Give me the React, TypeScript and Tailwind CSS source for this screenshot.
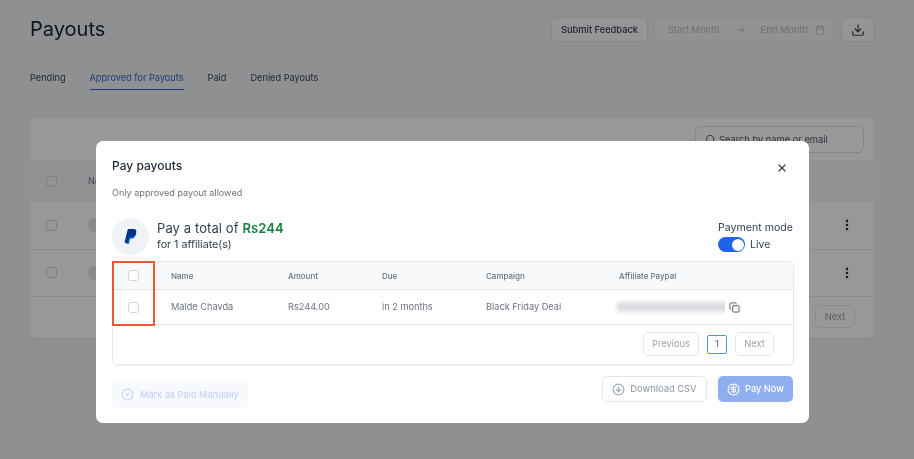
import React from "react";
import { ArrowRight, Calendar, CheckCircle2, CircleArrowDown, Copy, Download, X, MoreVertical, Search, CircleDollarSign } from "lucide-react";

const font = { fontFamily: "Inter, 'Liberation Sans', sans-serif" };

const PayPalLogo = () => (
  <svg width="14" height="16" viewBox="0 0 24 28">
    <path fill="#0070E0" d="M20.5 7.200c.2 1.500 0 3-.8 4.800-1.200 3.300-4 5-7.600 5H10.900c-.5 0-.9.400-1 .9l-1.200 7.300c-.1.500-.5.800-.9.800H4.200c-.4 0-.7-.4-.6-.8L7 8.500h9z" />
    <path fill="#003087" d="M7.300 0h9.200c3.300 0 5.600 1.900 4.700 6.500-1 5.200-4.300 7.800-9 7.800H9.600c-.6 0-1 .400-1.100.900l-1.300 8c-.1.400-.4.700-.8.700H1.500c-.5 0-.8-.4-.7-.9L6.200.9C6.300.400 6.800 0 7.300 0z" />
  </svg>
);

const BackdropPage = () => (
  <div className="min-h-[459px] bg-[#eef1f4] pl-[30px] pr-[40px] pt-[17px]">
    {/* Header */}
    <div className="-mr-[1px] flex h-[25px] items-center justify-between">
      <h1 className="text-[20px] leading-[25px] text-[#1b2230]">Payouts</h1>
      <div className="flex items-center gap-[6px] whitespace-nowrap text-[9.300px]">
        <div className="flex h-[25px] w-[97px] items-center justify-center rounded-[5px] border border-[#dde0e5] bg-[#f8f9fa] font-medium text-[#333c4e]">
          Submit Feedback
        </div>
        <div className="flex h-[25px] w-[181px] items-center rounded-[5px] border border-[#e5e7eb] bg-[#f3f4f6] pl-[13px] pr-[9px] text-[#b4b9c2]">
          <span>Start Month</span>
          <ArrowRight className="ml-[16px] h-[10px] w-[10px]" />
          <span className="ml-[15px]">End Month</span>
          <Calendar className="ml-auto h-[10px] w-[10px]" />
        </div>
        <div className="flex h-[25px] w-[34px] items-center justify-center rounded-[5px] border border-[#dde0e5] bg-[#f8f9fa]">
          <Download className="h-[14px] w-[14px] text-[#333c4e]" />
        </div>
      </div>
    </div>

    {/* Tabs */}
    <div className="mt-[20px] flex gap-[24px] border-b border-[#e8eaee] text-[9.200px] text-[#3b4352]">
      <div className="h-[28px] pt-[9px]">Pending</div>
      <div className="h-[28px] border-b-[1.500px] border-[#2f5fd0] pt-[9px] text-[#3d66c4]">Approved for Payouts</div>
      <div className="h-[28px] pt-[9px]">Paid</div>
      <div className="h-[28px] pt-[9px]">Denied Payouts</div>
    </div>

    {/* Card behind the dialog */}
    <div className="mt-[27px] h-[220px] rounded-[6px] bg-white/90 shadow-[0_1px_2px_rgba(0,0,0,0.08)]">
      <div className="flex h-[42px] items-start justify-end pr-[10px] pt-[8px]">
        <div className="flex h-[27px] w-[169px] items-center gap-[3px] rounded-[6px] border border-[#dde0e5] px-[9px] text-[9.300px] text-[#4b5563]">
          <Search className="h-[11px] w-[11px]" />
          <span>Search by name or email</span>
        </div>
      </div>
      <div className="flex h-[42px] items-center bg-[#f1f3f5] pl-[16px]">
        <div className="h-[11px] w-[11px] rounded-[3px] border border-[#d1d5db]" />
        <span className="ml-[31px] text-[9px] text-[#6b7280]">Name</span>
      </div>
      {[0, 1].map((row) => (
        <div key={row} className="flex h-[47.500px] items-center justify-between border-b border-[#e5e7eb] pl-[16px] pr-[20px]">
          <div className="flex items-center">
            <div className="h-[11px] w-[11px] rounded-[3px] border border-[#d1d5db]" />
            <div className="ml-[31px] h-[14px] w-[14px] rounded-full bg-[#e5e7ea]" />
          </div>
          <MoreVertical className="h-[14px] w-[14px] text-[#2b3444]" strokeWidth={2.500} />
        </div>
      ))}
      <div className="flex justify-end pr-[19px] pt-[8px]">
        <div className="flex h-[23px] w-[40px] items-center justify-center rounded-[5px] border border-[#e5e7eb] text-[9.300px] text-[#9ca3af]">
          Next
        </div>
      </div>
    </div>
  </div>
);

const columns = [
  { label: "Name", value: "Malde Chavda", width: "w-[117px]" },
  { label: "Amount", value: "Rs244.00", width: "w-[94px]" },
  { label: "Due", value: "in 2 months", width: "w-[104px]" },
  { label: "Campaign", value: "Black Friday Deal", width: "w-[133px]" },
];

const PayoutsDialog = () => (
  <div className="h-[282px] w-[713px] rounded-[7px] bg-white px-[16px] pt-[17px]">
    <div className="flex items-start justify-between">
      <h2 className="text-[12px] font-medium leading-[15px] text-[#1f2937]">Pay payouts</h2>
      <X className="mr-[5px] mt-[4px] h-[12px] w-[12px] text-[#374151]" strokeWidth={2.500} />
    </div>
    <p className="mt-[13px] text-[9.100px] leading-[12px] text-[#6b7280]">Only approved payout allowed</p>

    <div className="mt-[19px] flex items-start justify-between">
      <div className="flex items-center gap-[8px]">
        <div className="flex h-[37px] w-[37px] items-center justify-center rounded-full bg-[#eff3f7]">
          <PayPalLogo />
        </div>
        <div className="-mt-[2px]">
          <div className="text-[13px] leading-[18px] tracking-[0.1px] text-[#374151]">
            Pay a total of <span className="font-semibold text-[#15803d]">Rs244</span>
          </div>
          <div className="mt-[1px] text-[10.700px] leading-[14px] text-[#374151]">for 1 affiliate(s)</div>
        </div>
      </div>
      <div className="w-[75px] whitespace-nowrap pt-[2px]">
        <div className="text-[10.600px] leading-[15px] text-[#374151]">Payment mode</div>
        <div className="mt-[2px] flex items-center gap-[5px]">
          <div className="flex h-[15px] w-[27px] items-center justify-end rounded-full bg-[#1d64e8] pr-[1.500px]">
            <div className="h-[12px] w-[12px] rounded-full bg-white" />
          </div>
          <span className="text-[10.500px] leading-[15px] text-[#374151]">Live</span>
        </div>
      </div>
    </div>

    {/* Affiliates table */}
    <div className="relative mt-[6px] h-[104px] w-[682px] rounded-[5px] border border-[#e5e7eb] shadow-[0_1px_2px_rgba(0,0,0,0.06)]">
      <div className="flex h-[28px] items-center rounded-t-[5px] border-b border-[#e5e7eb] bg-[#f8f9fb] text-[8px] font-medium text-[#6b7280]">
        <div className="w-[58px] pl-[15px]">
          <div className="h-[11px] w-[11px] rounded-[3px] border border-[#d1d5db] bg-white" />
        </div>
        {columns.map((col) => (
          <div key={col.label} className={col.width}>{col.label}</div>
        ))}
        <div>Affiliate Paypal</div>
      </div>
      <div className="flex h-[35px] items-center border-b border-[#e5e7eb] text-[9.200px] text-[#6b7280]">
        <div className="w-[58px] pl-[15px]">
          <div className="h-[11px] w-[11px] rounded-[3px] border border-[#d1d5db] bg-white" />
        </div>
        {columns.map((col) => (
          <div key={col.label} className={col.width}>{col.value}</div>
        ))}
        <div className="-ml-[8px] flex h-[20px] w-[114px] items-center overflow-hidden pl-[6px]">
          <div className="h-[10px] w-[112px] shrink-0 rounded-[2px] bg-[#dcdde1] blur-[2px]" />
        </div>
        <Copy className="ml-[4px] h-[11px] w-[11px] text-[#4b5563]" />
      </div>
      <div className="flex items-center justify-end pr-[19px] pt-[7px] text-[9.300px] text-[#9ca3af]">
        <div className="flex h-[24px] w-[56px] items-center justify-center rounded-[5px] border border-[#e5e7eb]">Previous</div>
        <div className="ml-[8px] flex h-[19px] w-[20px] items-center justify-center rounded-[2px] border border-[#5b8def] font-medium text-[#5b7fc7]">1</div>
        <div className="ml-[8px] flex h-[24px] w-[39px] items-center justify-center rounded-[5px] border border-[#e5e7eb]">Next</div>
      </div>
      {/* Red annotation around the checkbox column */}
      <div className="absolute -left-px -top-px h-[65px] w-[43px] border-2 border-[#ee5734]" />
    </div>

    {/* Actions */}
    <div className="mt-[11px] flex items-start justify-between">
      <div className="mt-[5px] flex h-[27px] w-[136px] items-center gap-[6px] rounded-[6px] bg-[#f7f9fd] pl-[9px] text-[9.200px] font-medium text-[#c3d3f5]">
        <CheckCircle2 className="h-[13px] w-[13px]" />
        <span>Mark as Paid Manually</span>
      </div>
      <div className="flex items-center gap-[11px] text-[9.300px] font-medium">
        <div className="flex h-[26px] w-[105px] items-center justify-center gap-[5px] rounded-[5px] border border-[#e5e7eb] text-[#9ca3af]">
          <CircleArrowDown className="h-[13px] w-[13px]" />
          <span>Download CSV</span>
        </div>
        <div className="flex h-[26px] w-[75px] items-center justify-center gap-[5px] rounded-[5px] bg-[#8fafef] text-white">
          <CircleDollarSign className="h-[13px] w-[13px]" />
          <span>Pay Now</span>
        </div>
      </div>
    </div>
  </div>
);

export default function App() {
  return (
    <div style={font} className="relative h-[459px] w-[914px] overflow-hidden blur-[0.35px]">
      <BackdropPage />
      <div className="absolute inset-0 bg-black/40" />
      <div className="absolute left-[96px] top-[141px]">
        <PayoutsDialog />
      </div>
    </div>
  );
}
